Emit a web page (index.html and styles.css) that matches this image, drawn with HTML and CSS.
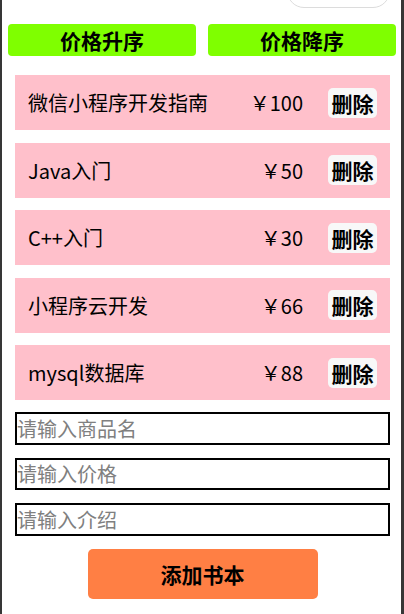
FILE: index.html
```html
<!DOCTYPE html>
<html lang="zh-CN">
<head>
<meta charset="utf-8">
<title>书本列表</title>
<link rel="stylesheet" href="styles.css">
</head>
<body>
<div class="page">
  <div class="capsule"></div>
  <div class="sort-bar">
    <button class="sort-btn">价格升序</button>
    <button class="sort-btn">价格降序</button>
  </div>
  <div class="list">
    <div class="book">
      <span class="title">微信小程序开发指南</span>
      <span class="price">￥100</span>
      <button class="del">删除</button>
    </div>
    <div class="book">
      <span class="title">Java入门</span>
      <span class="price">￥50</span>
      <button class="del">删除</button>
    </div>
    <div class="book">
      <span class="title">C++入门</span>
      <span class="price">￥30</span>
      <button class="del">删除</button>
    </div>
    <div class="book">
      <span class="title">小程序云开发</span>
      <span class="price">￥66</span>
      <button class="del">删除</button>
    </div>
    <div class="book">
      <span class="title">mysql数据库</span>
      <span class="price">￥88</span>
      <button class="del">删除</button>
    </div>
  </div>
  <div class="form">
    <input class="field" type="text" placeholder="请输入商品名">
    <input class="field" type="text" placeholder="请输入价格">
    <input class="field" type="text" placeholder="请输入介绍">
    <button class="add-btn">添加书本</button>
  </div>
</div>
</body>
</html>
```

FILE: styles.css
```css
html, body {
  margin: 0;
  padding: 0;
  background: #ffffff;
}

body {
  font-family: "Noto Sans CJK SC", "Noto Sans", sans-serif;
  color: #000;
}

.page {
  position: relative;
  box-sizing: border-box;
  min-height: 614px;
  border-left: 2px solid #363636;
  border-right: 3px solid #363636;
  overflow: hidden;
  padding-bottom: 15px;
}

.capsule {
  position: absolute;
  left: 285px;
  top: -26px;
  width: 101px;
  height: 32px;
  border: 1px solid #dcdcdc;
  border-radius: 17px;
  background: #fff;
}

.sort-bar {
  display: flex;
  gap: 12px;
  margin: 0 5px 0 6px;
  padding-top: 24px;
}

.sort-btn {
  flex: 1;
  height: 32px;
  border: none;
  border-radius: 4px;
  background: #7fff00;
  font-family: inherit;
  font-size: 21px;
  font-weight: 700;
  line-height: 32px;
  padding: 0;
  color: #000;
}

.list {
  margin: 19px 11px 0 13px;
  display: flex;
  flex-direction: column;
  gap: 12.5px;
}

.book {
  display: flex;
  align-items: center;
  height: 55px;
  background: #ffc0cb;
  padding: 0 13px 0 13px;
  font-size: 20px;
}

.title {
  flex: 1;
  white-space: nowrap;
}

.price {
  margin-right: 25px;
  white-space: nowrap;
}

.del {
  width: 49px;
  height: 30px;
  border: none;
  border-radius: 5px;
  background: #f8f8f8;
  font-family: inherit;
  font-size: 21px;
  font-weight: 700;
  padding: 0;
  line-height: 30px;
  color: #000;
}

.form {
  margin: 12px 11px 0 13px;
  display: flex;
  flex-direction: column;
  gap: 13px;
}

.field {
  box-sizing: border-box;
  height: 32.5px;
  width: 100%;
  margin: 0;
  border: 2px solid #000;
  padding: 0;
  font-family: inherit;
  font-size: 20px;
  outline: none;
  background: #fff;
}

.field::placeholder {
  color: #808080;
}

.add-btn {
  align-self: center;
  width: 230px;
  height: 50px;
  margin-top: 0.5px;
  border: none;
  border-radius: 5px;
  background: #ff7f44;
  font-family: inherit;
  font-size: 21px;
  font-weight: 700;
  color: #000;
  padding: 0;
}
```
